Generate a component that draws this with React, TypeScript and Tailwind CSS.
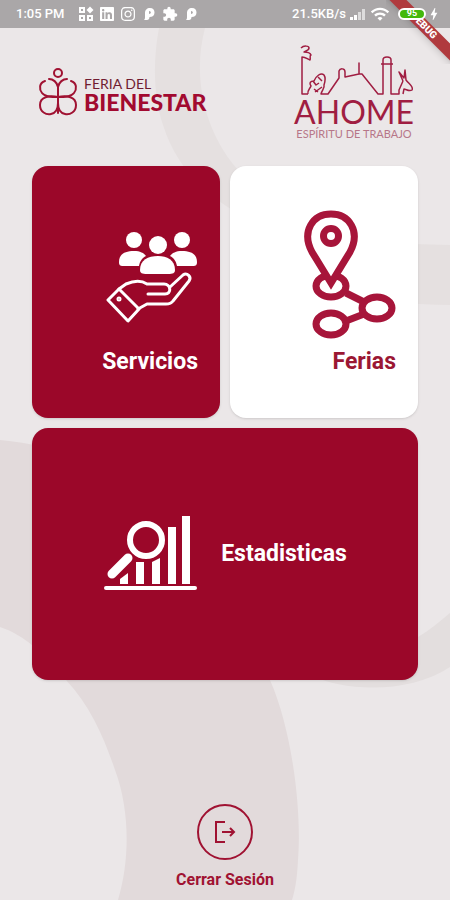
import React from 'react'
import { FaLinkedin } from 'react-icons/fa'
import { FaInstagram } from 'react-icons/fa6'
import { MdBolt, MdExtension, MdWifi } from 'react-icons/md'

interface CardProps {
    label: string;
    className: string;
    children: React.ReactNode;
}

const Background = () => (
    <svg
        className="absolute inset-0 h-full w-full"
        viewBox="0 0 450 900"
        preserveAspectRatio="none"
        aria-hidden="true"
    >
        <path
            fill="#e5e0e0"
            d="M159 28C153 60 153 95 163 125C185 195 250 225 300 235C350 245 400 243 450 245V305C380 305 320 290 290 255L240 172C210 140 190 85 205 28Z"
        />
        <path
            fill="#e2dadb"
            d="M0 440C120 450 220 540 270 680C292 730 302 810 298 860C297 880 295 890 292 900H118C130 860 130 810 115 770C105 740 90 705 66 680C45 655 25 635 0 627Z"
        />
        <path fill="#e3dede" d="M450 613C440 621 430 630 418 637L310 675C345 692 410 694 450 667Z" />
    </svg>
)

const StatusBar = () => (
    <header className="relative flex h-7 items-center justify-between pr-2 pl-4 text-[13px] font-medium text-white">
        <div className="flex items-center gap-[5px]">
            <span className="mr-2">1:05 PM</span>
            <svg className="size-4" viewBox="0 0 16 16" fill="none" stroke="currentColor" strokeWidth="2" aria-hidden="true">
                <rect x="2" y="2" width="4" height="4" />
                <rect x="2" y="10" width="4" height="4" />
                <rect x="10" y="10" width="4" height="4" />
                <path d="M12 0.5L15.5 4L12 7.5L8.5 4Z" fill="currentColor" stroke="none" />
            </svg>
            <FaLinkedin className="size-4" />
            <FaInstagram className="size-4" />
            <PandoraIcon />
            <MdExtension className="size-4" />
            <PandoraIcon />
        </div>
        <div className="flex items-center">
            <span>21.5KB/s</span>
            <svg className="ml-1 h-3 w-4" viewBox="0 0 16 12" fill="currentColor" aria-hidden="true">
                <path d="M0 9H3V12H0ZM4 7H7V12H4Z" />
                <path d="M8 4H11V12H8ZM12 1H15V12H12Z" opacity="0.6" />
            </svg>
            <MdWifi className="ml-1 size-5" />
            <span className="ml-2 flex h-3 w-7 items-center justify-center rounded-full border-2 border-white bg-[#43b80c] text-[9px] font-bold">
                95
            </span>
            <MdBolt className="size-4" />
        </div>
    </header>
)

const PandoraIcon = () => (
    <svg className="size-4" viewBox="0 0 16 16" aria-hidden="true">
        <path
            fill="currentColor"
            fillRule="evenodd"
            d="M4 7C4 4 6 2 9 2C12 2 13.5 4 13.5 6.5C13.5 9.5 11.5 11 8.5 11C8.5 13 7.500 14 6 14H3C4 13 4 12 4 10ZM8 5V8C10.5 8 10.5 5 8 5Z"
        />
    </svg>
)

const DebugRibbon = () => (
    <div className="pointer-events-none absolute top-0 right-0 size-16 overflow-hidden">
        <div className="absolute top-5 -right-6 w-[100px] rotate-45 bg-[#b03a3e] text-center text-[10px] leading-3 font-black text-white shadow-md">
            DEBUG
        </div>
    </div>
)

const FeriaLogo = () => (
    <div className="flex items-center gap-1.5">
        <svg className="h-12 w-10" viewBox="0 0 40 48" fill="none" stroke="#a01232" strokeWidth="2" strokeLinecap="round" aria-hidden="true">
            <circle cx="20" cy="5" r="4" />
            <path d="M11 11C15 11 19 14 20 19C21 14 25 11 29 11M20 19V45" />
            <path d="M7 13C1 15 1 21 4 25C7 29 14 29 20 29C26 29 33 29 36 25C39 21 39 15 33 13" />
            <path d="M20 29C11 27 2 29 2 37C2 44 8 47 13 46C18 45 20 40 20 35C20 40 22 45 27 46C32 47 38 44 38 37C38 29 29 27 20 29" />
        </svg>
        <div className="pt-1 font-[Lato,sans-serif]">
            <div className="text-[14px] leading-4 text-[#711b31]">FERIA DEL</div>
            <div className="text-[23px] leading-5 font-black text-[#a20a30]">BIENESTAR</div>
        </div>
    </div>
)

const AhomeLogo = () => (
    <div className="flex flex-col items-center font-[Lato,sans-serif] text-[#a01e42]">
        <svg className="h-[52px] w-[120px]" viewBox="0 0 120 52" fill="none" stroke="currentColor" strokeWidth="1.5" strokeLinejoin="round" aria-hidden="true">
            <path d="M7 4C10 1 15 2 15 4C15 7 10 7 10 8C13 8 16 8 17 11C15 12 17 14 16 16C13 15 12 13 8 13V50H14" />
            <path d="M14 50C13 46 16 45 17 42C15 39 16 37 20 37C22 32 27 28 30 31C32 34 31 38 30 41C31 44 28 46 27 50H34L45 34V27C46 24 51 24 51 28V33L65 30V19V30H68L84 50H89V16C89 12 97 12 97 16V50H105V46L109 37M87 20H99" />
            <path d="M19 37L22 41L25 39M20 45L24 48M24 33L28 37M21 48L28 43M109 37L105 28L110 34L111 26L112 36C115 40 120 43 118 46C115 48 112 45 110 45L109 50" />
        </svg>
        <div className="text-[32px] leading-8">AHOME</div>
        <div className="text-[11px] leading-3 text-[#b77789]">ESPÍRITU DE TRABAJO</div>
    </div>
)

const ServiciosIcon = () => (
    <svg className="h-[92px] w-[92px]" viewBox="0 0 92 92" fill="none" aria-hidden="true">
        <g fill="currentColor">
            <circle cx="28" cy="8" r="8" />
            <circle cx="76" cy="8" r="8" />
            <path d="M13 30C13 22 19 19 28 19C34 19 38 21 40 24C36 26 34 29 33 34H17C14 34 13 33 13 30Z" />
            <path d="M91 30C91 22 85 19 76 19C70 19 66 21 64 24C68 26 70 29 71 34H87C90 34 91 33 91 30Z" />
            <circle cx="52" cy="13" r="9" />
            <path d="M34 38C34 28 42 24 52 24C61 24 69 28 69 38C69 41 67 42 62 42H41C36 42 34 41 34 38Z" />
        </g>
        <g stroke="currentColor" strokeWidth="3" strokeLinejoin="round" strokeLinecap="round">
            <path d="M2 68L13 57L33 77L22 89Z" />
            <path d="M13 57L20 52C27 49 35 48 41 52H58C65 52 66 62 59 62H42M64 55L77 43C81 40 86 45 83 49L67 69C65 72 63 72 60 72H41L32 77" />
            <circle cx="13" cy="67" r="1" />
        </g>
    </svg>
)

const FeriasIcon = () => (
    <svg className="h-[130px] w-[92px]" viewBox="0 0 92 130" fill="none" stroke="#a7153a" strokeWidth="7" aria-hidden="true">
        <path d="M42 83L60 92M42 111L60 104" />
        <ellipse cx="27" cy="76" rx="15" ry="11" />
        <ellipse cx="73" cy="98" rx="15" ry="11" />
        <ellipse cx="27" cy="114" rx="15" ry="11" />
        <path fill="#fff" d="M27 73L8 42C-3 21 9 4 27 4C45 4 57 21 46 42Z" />
        <circle cx="27" cy="26" r="7.5" />
    </svg>
)

const EstadisticasIcon = () => (
    <svg className="h-[78px] w-[94px]" viewBox="0 0 94 78" fill="none" aria-hidden="true">
        <g fill="currentColor">
            <path d="M17 69V64L25 58V69Z" />
            <path d="M33 47H41V69H33Z" />
            <path d="M49 47L57 43V69H49Z" />
            <path d="M65 12H73V69H65Z" />
            <path d="M79 1H87V69H79Z" />
        </g>
        <path stroke="currentColor" strokeWidth="4" strokeLinecap="round" d="M3 73H92" />
        <path stroke="currentColor" strokeWidth="9" strokeLinecap="round" d="M9 59L25 43" />
        <circle cx="43" cy="25" r="16" stroke="currentColor" strokeWidth="6" />
    </svg>
)

const Card: React.FC<CardProps> = ({ label, className, children }) => {
    return (
        <button type="button" className={`flex h-[252px] cursor-pointer rounded-2xl text-[23px] leading-7 font-bold shadow-sm ${className}`}>
            {children}
            <span>{label}</span>
        </button>
    )
}

const App = () => {
    return (
        <div className="relative flex min-h-screen flex-col overflow-hidden bg-[#ebe7e8] font-[Roboto,sans-serif]">
            <Background />
            <div className="relative bg-[#aaa7a8]">
                <DebugRibbon />
                <StatusBar />
            </div>

            <div className="flex h-[138px] items-start justify-between pt-4 pr-9 pl-[38px]">
                <div className="relative pt-6">
                    <FeriaLogo />
                </div>
                <div className="relative">
                    <AhomeLogo />
                </div>
            </div>

            <main className="relative grid grid-cols-2 gap-2.5 px-8">
                <Card label="Servicios" className="flex-col items-end justify-end gap-6 bg-[#9b0729] pr-[22px] pb-[42px] text-white">
                    <ServiciosIcon />
                </Card>
                <Card label="Ferias" className="flex-col items-end justify-end gap-2 bg-white pr-[22px] pb-[42px] text-[#9b1733]">
                    <FeriasIcon />
                </Card>
                <Card label="Estadisticas" className="col-span-2 items-center justify-center gap-6 bg-[#9b0729] text-white">
                    <EstadisticasIcon />
                </Card>
            </main>

            <footer className="relative mt-auto flex justify-center pb-2">
                <button type="button" className="flex cursor-pointer flex-col items-center gap-2 text-[16px] leading-6 font-bold text-[#a01232]">
                    <span className="flex size-14 items-center justify-center rounded-full border-2 border-[#a01232]">
                        <svg className="size-6" viewBox="0 0 24 24" fill="none" stroke="currentColor" strokeWidth="2" aria-hidden="true">
                            <path d="M12 2H3V22H12M9 12H21M17 8L21 12L17 16" />
                        </svg>
                    </span>
                    <span>Cerrar Sesión</span>
                </button>
            </footer>
        </div>
    )
}

export default App
